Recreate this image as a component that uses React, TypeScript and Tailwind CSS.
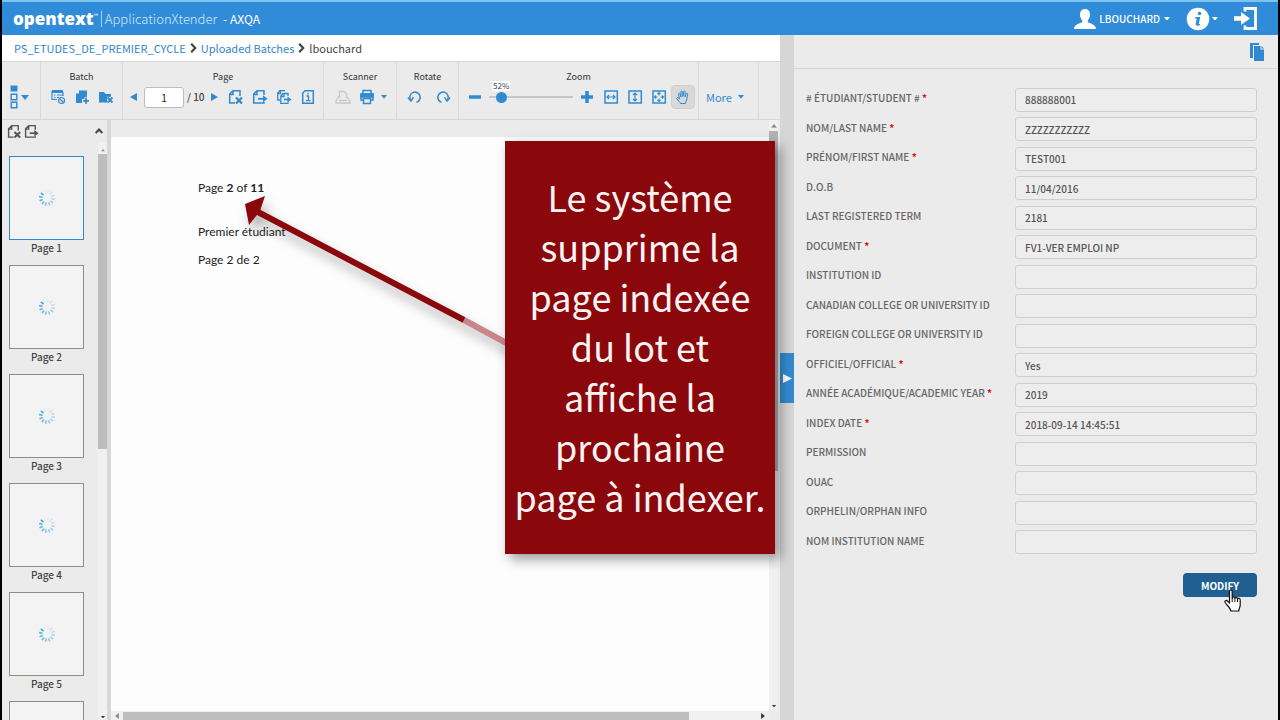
import type { ReactNode } from "react";

interface Field {
  label: string;
  value?: string;
  required?: boolean;
}

const fields: Field[] = [
  { label: "# ÉTUDIANT/STUDENT #", value: "888888001", required: true },
  { label: "NOM/LAST NAME", value: "ZZZZZZZZZZZ", required: true },
  { label: "PRÉNOM/FIRST NAME", value: "TEST001", required: true },
  { label: "D.O.B", value: "11/04/2016" },
  { label: "LAST REGISTERED TERM", value: "2181" },
  { label: "DOCUMENT", value: "FV1-VER EMPLOI NP", required: true },
  { label: "INSTITUTION ID" },
  { label: "CANADIAN COLLEGE OR UNIVERSITY ID" },
  { label: "FOREIGN COLLEGE OR UNIVERSITY ID" },
  { label: "OFFICIEL/OFFICIAL", value: "Yes", required: true },
  { label: "ANNÉE ACADÉMIQUE/ACADEMIC YEAR", value: "2019", required: true },
  { label: "INDEX DATE", value: "2018-09-14 14:45:51", required: true },
  { label: "PERMISSION" },
  { label: "OUAC" },
  { label: "ORPHELIN/ORPHAN INFO" },
  { label: "NOM INSTITUTION NAME" },
];

const pages = [1, 2, 3, 4, 5];

function Icon({ children, className = "size-4" }: { children: ReactNode; className?: string }) {
  return (
    <svg viewBox="0 0 16 16" className={`shrink-0 ${className}`} fill="none" stroke="currentColor" strokeWidth="1.5" aria-hidden="true">
      {children}
    </svg>
  );
}

const Caret = ({ className = "w-2" }: { className?: string }) => (
  <svg viewBox="0 0 8 5" className={`shrink-0 ${className}`} fill="currentColor" aria-hidden="true">
    <path d="M0 0h8L4 5z" />
  </svg>
);

const PageDelete = ({ className }: { className?: string }) => (
  <Icon className={className}>
    <path d="M7 14H1.700V5L5 1.700h7V7M5 2v3.500H2" />
    <path d="M8 8.500l6 6M14 8.500l-6 6" strokeWidth="2.200" />
  </Icon>
);

const PageExport = ({ className }: { className?: string }) => (
  <Icon className={className}>
    <path d="M12 6V1.700H5L1.700 5v9H12v-1M5 2v3.500H2" />
    <path d="M6 9.800h6" strokeWidth="1.800" />
    <path d="M11 6.300l4.500 3.500L11 13.300z" fill="currentColor" stroke="none" />
  </Icon>
);

function ToolButton({ label, active, children }: { label: string; active?: boolean; children: ReactNode }) {
  return (
    <button aria-label={label} className={`flex h-6 w-6 items-center justify-center ${active ? "rounded-sm border border-[#cfcfcf] bg-[#d9d9d9]" : ""}`}>
      {children}
    </button>
  );
}

interface ToolGroupProps {
  title?: string;
  className: string;
  rowClassName: string;
  children: ReactNode;
}

function ToolGroup({ title, className, rowClassName, children }: ToolGroupProps) {
  return (
    <div className={`flex shrink-0 flex-col border-r border-[#dadada] pt-[7px] ${className}`}>
      <div className="h-4 text-center text-[9px] leading-4 text-[#333]">{title}</div>
      <div className={`flex h-6 items-center ${rowClassName}`}>{children}</div>
    </div>
  );
}

function Spinner() {
  return (
    <svg viewBox="0 0 18 18" className="size-[18px]" stroke="#2ea3e6" strokeWidth="1.6" aria-hidden="true">
      {Array.from({ length: 12 }, (_, i) => (
        <line key={i} x1="9" y1="1" x2="9" y2="4.500" opacity={i === 0 ? 0.05 : i / 12} transform={`rotate(${i * 30 - 20} 9 9)`} />
      ))}
    </svg>
  );
}

function Header() {
  return (
    <header className="flex h-[35px] shrink-0 items-center border-t-2 border-[#7cc4f0] bg-[#308cd8] pr-5 pl-[11px] text-white">
      <span className="font-['Open_Sans'] text-[17px] leading-8 font-extrabold">opentext</span>
      <span className="self-start pt-2 text-[6px] leading-3">™</span>
      <span className="mx-[3px] h-4 w-px bg-[#a8d0f0]" />
      <span className="text-[13px] leading-8 font-light text-[#d3e8f8]">ApplicationXtender</span>
      <span className="ml-[6px] text-[12px] leading-8">- AXQA</span>
      <div className="ml-auto flex items-center">
        <button className="flex items-center text-[10px] leading-8 font-medium">
          <svg viewBox="0 0 24 22" className="mr-[2px] h-[22px] w-6" fill="currentColor" aria-hidden="true">
            <path d="M12 1c3.500 0 5 2.500 5 5.500 0 2.500-.8 4.500-2.200 5.800v1.900c3 1.300 8 2.300 8.200 6.800H1c.200-4.500 5.200-5.500 8.200-6.800v-1.900C7.800 11 7 9 7 6.500 7 3.500 8.500 1 12 1z" />
          </svg>
          LBOUCHARD
          <Caret className="ml-[4px] w-[6px]" />
        </button>
        <button aria-label="Information" className="ml-4 flex items-center">
          <svg viewBox="0 0 24 24" className="size-6" aria-hidden="true">
            <circle cx="12" cy="12" r="11.300" fill="#fff" />
            <circle cx="13.500" cy="6.500" r="1.800" fill="#308cd8" />
            <path d="M9.300 10h5l-1.600 7.200 1.600-.4-.3 1.400c-1.600.7-4.600 1-4.400-1.100l1.200-5.500H9z" fill="#308cd8" />
          </svg>
          <Caret className="ml-[2px] w-[6px]" />
        </button>
        <button aria-label="Sign out" className="ml-4">
          <svg viewBox="0 0 24 24" className="size-6" aria-hidden="true">
            <path d="M11 4.500V1.500h10.500v20H11v-3" fill="none" stroke="#fff" strokeWidth="2.800" />
            <path d="M0 9.200h7V5l9 6.500L7 18v-4.200H0z" fill="#fff" />
          </svg>
        </button>
      </div>
    </header>
  );
}

const Chevron = () => (
  <svg viewBox="0 0 7 10" className="mx-1 h-[10px] w-[7px]" fill="none" stroke="#444" strokeWidth="2.2" aria-hidden="true">
    <path d="M1.200 .8L5.200 5 1.200 9.200" />
  </svg>
);

function Breadcrumb() {
  return (
    <nav className="flex h-[26px] shrink-0 items-center bg-white pl-3 text-[11px] leading-4 text-[#3186cb]">
      <a href="#app">PS_ETUDES_DE_PREMIER_CYCLE</a>
      <Chevron />
      <a href="#batches">Uploaded Batches</a>
      <Chevron />
      <span className="text-[#444]">lbouchard</span>
    </nav>
  );
}

function Toolbar() {
  return (
    <div className="flex h-[59px] shrink-0 border-t border-b border-[#d6d6d6] bg-[#ebebeb] text-[#318ad0]">
      <ToolGroup className="w-[39px]" rowClassName="pl-2">
        <button aria-label="Thumbnail view" className="flex items-center gap-[3px]">
          <svg viewBox="0 0 8 24" className="h-6 w-2" aria-hidden="true">
            <path d="M.500.500h7v6h-7z" fill="currentColor" />
            <path d="M1.200 9.200h5.600v5.600H1.200zM1.200 17.200h5.600v5.600H1.200z" fill="none" stroke="currentColor" strokeWidth="1.400" />
          </svg>
          <Caret />
        </button>
      </ToolGroup>

      <ToolGroup title="Batch" className="w-[82px]" rowClassName="pl-[5px]">
        <ToolButton label="Batch properties">
          <Icon>
            <path d="M2 2.500h11" strokeWidth="3" />
            <path d="M2 2v8.500h5M4 6h1.500M7 6h6M4 8.500h1.500M7 8.500h2M13 3v4" strokeWidth="1.200" />
            <circle cx="11.500" cy="11.500" r="3" strokeWidth="1.200" />
            <path d="M9.500 9.500l4 4" strokeWidth="1.200" />
          </Icon>
        </ToolButton>
        <ToolButton label="New batch">
          <Icon>
            <path d="M5 1.500h8v6.500h-2.500v2H8v4H2V4.500h3z" fill="currentColor" stroke="none" />
            <path d="M9 11.800h6M12 8.800v6" strokeWidth="1.800" />
          </Icon>
        </ToolButton>
        <ToolButton label="Delete batch">
          <Icon>
            <path d="M1 3h5l1.500 2H13v2.500L11 8l-2-.5v6H1z" fill="currentColor" stroke="none" />
            <path d="M9.500 8.500l5 5M14.500 8.500l-5 5" strokeWidth="1.800" />
          </Icon>
        </ToolButton>
      </ToolGroup>

      <ToolGroup title="Page" className="w-[201px]" rowClassName="pl-[7px]">
        <button aria-label="Previous page" className="w-[14px]">
          <svg viewBox="0 0 7 8" className="h-2 w-[7px]" fill="currentColor" aria-hidden="true"><path d="M7 0v8L0 4z" /></svg>
        </button>
        <input aria-label="Page number" defaultValue="1" className="h-[21px] w-10 rounded-[3px] border border-[#bdbdbd] bg-white text-center text-[11px] text-[#333]" />
        <span className="ml-[3px] w-5 text-[10px] leading-4 font-medium whitespace-nowrap text-[#444]">/ 10</span>
        <button aria-label="Next page" className="ml-1 w-[13px]">
          <svg viewBox="0 0 7 8" className="h-2 w-[7px]" fill="currentColor" aria-hidden="true"><path d="M0 0v8l7-4z" /></svg>
        </button>
        <ToolButton label="Delete page"><PageDelete /></ToolButton>
        <ToolButton label="Export page"><PageExport /></ToolButton>
        <ToolButton label="Export pages">
          <Icon>
            <path d="M9 1.700H4L1.700 4v7H4M12 7V4.500H7L4.800 7v7.300H12v-1M4.500 2v2.500H2M8 5v2.500H5" strokeWidth="1.300" />
            <path d="M8 10.500h4" strokeWidth="1.800" />
            <path d="M11.500 7.500l4 3-4 3z" fill="currentColor" stroke="none" />
          </Icon>
        </ToolButton>
        <ToolButton label="Page properties">
          <Icon>
            <path d="M5 1.700h8.300v12.600H2.700V4z" />
            <path d="M6.500 7h2v4.500M6 11.700h4.500M8 4v1.600" strokeWidth="1.300" />
          </Icon>
        </ToolButton>
      </ToolGroup>

      <ToolGroup title="Scanner" className="w-[73px]" rowClassName="pl-[7px]">
        <ToolButton label="Scan">
          <Icon className="size-4 text-[#c8c8c8]">
            <path d="M4.500 9V2.500h4.500L11.500 5v4M4 7l-3 5v2h14v-2l-3-4M4 11.500h8" strokeWidth="1.300" />
          </Icon>
        </ToolButton>
        <ToolButton label="Print">
          <Icon>
            <path d="M4 4.500v-3h8v3M2 5h12v6h-2M4 11H2V5" />
            <path d="M2 5h12v3H2z" fill="currentColor" />
            <path d="M4.500 9.500h7v5h-7z" fill="#ebebeb" />
          </Icon>
        </ToolButton>
        <Caret className="ml-[2px] w-[6px]" />
      </ToolGroup>

      <ToolGroup title="Rotate" className="w-[62px]" rowClassName="gap-1 pl-[6px]">
        <ToolButton label="Rotate left">
          <Icon>
            <path d="M3.500 11a5.200 5.200 0 1 1 6 2.300" />
            <path d="M1 8.500l3 3.500 2.500-3.800" strokeWidth="1.400" />
          </Icon>
        </ToolButton>
        <ToolButton label="Rotate right">
          <Icon>
            <path d="M12.500 11a5.200 5.200 0 1 0-6 2.300" />
            <path d="M15 8.500L12 12 9.500 8.200" strokeWidth="1.400" />
          </Icon>
        </ToolButton>
      </ToolGroup>

      <ToolGroup title="Zoom" className="w-60" rowClassName="pl-1">
        <ToolButton label="Zoom out"><Icon><path d="M2 8h12" strokeWidth="3.500" /></Icon></ToolButton>
        <div className="relative mx-[2px] flex h-6 items-center">
          <input
            type="range"
            aria-label="Zoom level"
            defaultValue="10"
            className="h-[2px] w-[84px] appearance-none bg-[#c6c6c6] [&::-webkit-slider-thumb]:size-[11px] [&::-webkit-slider-thumb]:appearance-none [&::-webkit-slider-thumb]:rounded-full [&::-webkit-slider-thumb]:bg-[#318ad0]"
          />
          <span className="absolute -top-1 left-[3px] bg-white px-px text-[8px] leading-[10px] text-[#444]">52%</span>
        </div>
        <ToolButton label="Zoom in"><Icon><path d="M2 8h12M8 2v12" strokeWidth="3.500" /></Icon></ToolButton>
        <ToolButton label="Fit width">
          <Icon>
            <path d="M2 2h12.300v12H2z" />
            <path d="M4 8h8M6 6L4 8l2 2M10 6l2 2-2 2" strokeWidth="1.200" />
          </Icon>
        </ToolButton>
        <ToolButton label="Fit height">
          <Icon>
            <path d="M2 2h12.300v12H2z" />
            <path d="M8 4v8M6 6l2-2 2 2M6 10l2 2 2-2" strokeWidth="1.200" />
          </Icon>
        </ToolButton>
        <ToolButton label="Fit page">
          <Icon>
            <path d="M2 2h12.300v12H2z" />
            <path d="M8 3.500v3M8 9.500v3M3.500 8h3M9.500 8h3M6.500 5L8 3.500 9.500 5M6.500 11L8 12.500 9.500 11M5 6.500L3.500 8 5 9.500M11 6.500L12.500 8 11 9.500" strokeWidth="1.100" />
          </Icon>
        </ToolButton>
        <ToolButton label="Pan" active>
          <Icon>
            <path d="M5 13.500L1.800 9.800c-.6-.9.600-1.700 1.300-1L4.500 10 3.600 5.200c-.2-1.100 1.200-1.400 1.500-.3L6 8l-.2-5.200c0-1.100 1.500-1.100 1.600 0L7.900 7.500l.8-4.800c.2-1 1.600-.8 1.500.3L9.900 8l1.400-3.300c.4-1 1.700-.5 1.400.500L11.600 11l-1.300 3.500H5.500z" strokeWidth="1" />
          </Icon>
        </ToolButton>
      </ToolGroup>

      <ToolGroup className="w-[60px]" rowClassName="pl-[7px]">
        <button className="flex items-center gap-[6px] text-[11px] leading-4">
          More
          <Caret className="w-[6px]" />
        </button>
      </ToolGroup>
    </div>
  );
}

function Thumbnails() {
  return (
    <aside className="flex w-[109px] shrink-0 flex-col border-r-4 border-[#d8d8d8] bg-[#ebebeb]">
      <div className="flex h-[22px] items-center pl-[5px] text-[#555]">
        <button aria-label="Delete selected pages"><PageDelete className="size-[15px]" /></button>
        <button aria-label="Export selected pages" className="ml-[2px]"><PageExport className="size-[15px]" /></button>
        <button aria-label="Collapse" className="mr-1 ml-auto">
          <svg viewBox="0 0 8 6" className="h-[6px] w-2" fill="none" stroke="#444" strokeWidth="2" aria-hidden="true"><path d="M.700 5L4 1.500 7.300 5" /></svg>
        </button>
      </div>
      <div className="flex min-h-0 flex-1">
        <ul className="min-h-0 flex-1 overflow-hidden pt-[14px] pl-[7px]">
          {pages.map((page) => (
            <li key={page} className="h-[109px]">
              <button className="flex w-[75px] flex-col items-center text-[10px] leading-4 font-medium text-[#444]">
                <span className={`flex h-[84px] w-[75px] items-center justify-center border bg-[#f3f3f3] ${page === 1 ? "border-[#318ad0]" : "border-[#8c8c8c]"}`}>
                  <Spinner />
                </span>
                Page {page}
              </button>
            </li>
          ))}
          <li>
            <button aria-label="Page 6" className="h-[84px] w-[75px] border border-[#8c8c8c] bg-[#f3f3f3]" />
          </li>
        </ul>
        <div className="flex w-[9px] flex-col items-center bg-[#f0f0f0] pt-[7px] pb-[2px]">
          <svg viewBox="0 0 8 5" className="w-1 rotate-180" fill="#888" aria-hidden="true"><path d="M0 0h8L4 5z" /></svg>
          <div className="mt-[2px] h-[52%] w-full bg-[#bdbdbd]" />
          <svg viewBox="0 0 8 5" className="mt-auto w-1" fill="#333" aria-hidden="true"><path d="M0 0h8L4 5z" /></svg>
        </div>
      </div>
    </aside>
  );
}

function Viewer() {
  return (
    <main className="flex min-w-0 flex-1 flex-col bg-[#ebebeb]">
      <div className="flex min-h-0 flex-1">
        <div className="mt-[17px] min-w-0 flex-1 bg-[#fdfdfd] pt-[43px] pl-[87px] font-[Lato] text-[12px] leading-4 text-[#222]">
          <p>Page <b>2</b> of <b>11</b></p>
          <p className="mt-7">Premier étudiant</p>
          <p className="mt-3">Page 2 de 2</p>
        </div>
        <div className="mr-[2px] flex w-[9px] flex-col items-center bg-[#f0f0f0] pt-1">
          <svg viewBox="0 0 8 5" className="w-[6px] rotate-180" fill="#888" aria-hidden="true"><path d="M0 0h8L4 5z" /></svg>
          <div className="mt-[3px] h-[58%] w-full bg-[#b4b4b4]" />
          <svg viewBox="0 0 8 5" className="mt-auto mb-1 w-1" fill="#333" aria-hidden="true"><path d="M0 0h8L4 5z" /></svg>
        </div>
      </div>
      <div className="mr-[11px] flex h-[9px] shrink-0 items-center bg-[#f0f0f0] px-1 pt-px">
        <svg viewBox="0 0 5 8" className="h-[6px] w-1" fill="#888" aria-hidden="true"><path d="M5 0v8L0 4z" /></svg>
        <div className="ml-1 h-full w-[87%] bg-[#bdbdbd]" />
        <svg viewBox="0 0 5 8" className="ml-auto h-[6px] w-1" fill="#333" aria-hidden="true"><path d="M0 0v8l5-4z" /></svg>
      </div>
    </main>
  );
}

function IndexPanel() {
  return (
    <section className="flex w-[484px] shrink-0 flex-col bg-[#ebebeb]">
      <div className="flex h-[34px] items-center justify-end border-b border-[#d6d6d6] pr-[13px]">
        <button aria-label="Copy index">
          <svg viewBox="0 0 16 18" className="h-[18px] w-4" fill="#318ad0" aria-hidden="true">
            <path d="M1 0h9v2H4v13H1z" />
            <path d="M5 3h6.500v3.500H15V18H5zM12.500 3L15 5.500h-2.500z" />
          </svg>
        </button>
      </div>
      <form className="flex flex-col pt-4 pr-[21px] pl-3" onSubmit={(e) => e.preventDefault()}>
        <div className="flex h-[472px] flex-col">
          {fields.map((field, i) => (
            <div key={field.label} className="flex flex-1 items-center">
              <label htmlFor={`field-${i}`} className="w-[209px] pb-[3px] text-[10px] leading-4 font-medium whitespace-nowrap text-[#666]">
                {field.label}
                {field.required && <span className="font-bold text-[#e01010]"> *</span>}
              </label>
              <input
                id={`field-${i}`}
                defaultValue={field.value}
                className="h-6 min-w-0 flex-1 rounded-[3px] border border-[#cfcfcf] bg-[#ededed] px-[9px] text-[10px] font-medium text-[#555]"
              />
            </div>
          ))}
        </div>
        <div className="relative mt-4 flex self-end">
          <button className="h-6 w-[74px] rounded-[4px] bg-[#1f5f92] text-[10px] font-bold text-white">MODIFY</button>
          <svg viewBox="0 0 18 24" className="absolute top-4 left-[41px] h-6 w-[18px]" fill="#fff" stroke="#111" strokeWidth="1.200" strokeLinejoin="round" aria-hidden="true">
            <path d="M5.500 14V2.500c0-2 2.700-2 2.700 0V9c.3-1.400 2.500-1.300 2.700.300.500-1.200 2.500-1 2.600.600.700-1 2.700-.6 2.700 1.100v5c0 2.500-1.400 3.500-1.400 6H6.800c0-2.500-3.200-5-5.600-8.500-1-1.500 1-2.700 2.200-1.500z" />
            <path d="M8.200 9v4M10.900 9.500V13M13.500 10v3" fill="none" strokeWidth="1" />
          </svg>
        </div>
      </form>
    </section>
  );
}

function Callout() {
  return (
    <>
      <svg viewBox="0 0 300 180" className="absolute top-[180px] left-[228px] h-[180px] w-[300px] drop-shadow-[4px_8px_6px_rgba(0,0,0,0.3)]" aria-hidden="true">
        <path d="M234 140L280 165" stroke="#c9858b" strokeWidth="6" />
        <path d="M26 31L234 140" stroke="#8a070b" strokeWidth="6" />
        <path d="M15 24l20-8-5 15-11 14z" fill="#8a070b" />
      </svg>
      <div className="absolute top-[141px] left-[503px] flex h-[413px] w-[270px] items-center justify-center bg-[#8a070b] text-center text-[36px] leading-[50px] whitespace-nowrap text-[#fff3f3] shadow-[5px_5px_12px_rgba(0,0,0,0.4)]">
        <p className="pb-1">
          Le système<br />supprime la<br />page indexée<br />du lot et<br />affiche la<br />prochaine<br />page à indexer.
        </p>
      </div>
    </>
  );
}

export default function App() {
  return (
    <div className="relative flex h-screen flex-col overflow-hidden border-r-2 border-l-2 border-black bg-[#ebebeb] font-['Noto_Sans_CJK_SC',sans-serif]">
      <Header />
      <div className="flex min-h-0 flex-1">
        <div className="flex min-w-0 flex-1 flex-col">
          <Breadcrumb />
          <Toolbar />
          <div className="flex min-h-0 flex-1">
            <Thumbnails />
            <Viewer />
          </div>
        </div>
        <div className="flex w-[14px] shrink-0 flex-col bg-[#d6d6d6] pt-[318px]">
          <button aria-label="Collapse index panel" className="flex h-[50px] items-center justify-center bg-[#318ad0]">
            <svg viewBox="0 0 8 8" className="size-[9px]" fill="#fff" aria-hidden="true"><path d="M0 0v8l8-4z" /></svg>
          </button>
        </div>
        <IndexPanel />
      </div>
      <Callout />
    </div>
  );
}
